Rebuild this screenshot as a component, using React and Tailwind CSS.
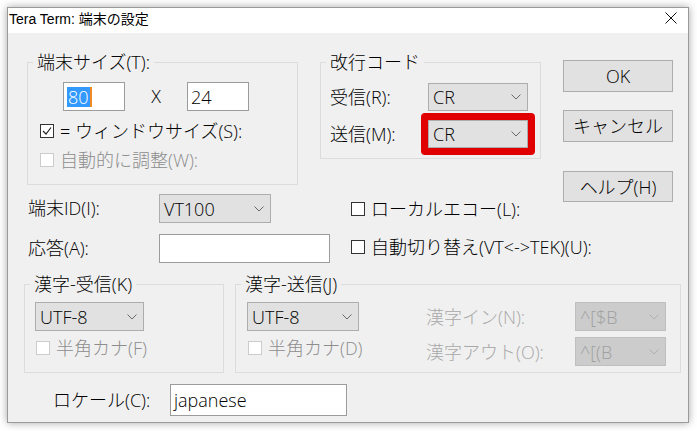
import React from "react";

function Chevron({ disabled }) {
  return (
    <svg width="10" height="6" viewBox="0 0 10 6" className="shrink-0">
      <path d="M0.5 0.5 L5 5 L9.5 0.5" fill="none" stroke={disabled ? "#b0b0b0" : "#6a6a6a"} strokeWidth="1" />
    </svg>
  );
}

function Select({ value, className = "", disabled }) {
  return (
    <div
      className={`shrink-0 flex items-center justify-between border pl-[4px] pr-[6px] leading-[22px] ${
        disabled ? "bg-[#cccccc] border-[#bfbfbf] text-[#a0a0a0]" : "bg-[#e1e1e1] border-[#adadad] text-black"
      } ${className}`}
    >
      <span>{value}</span>
      <Chevron disabled={disabled} />
    </div>
  );
}

function Input({ className = "", children }) {
  return (
    <div className={`shrink-0 flex items-center bg-white border border-[#9c9c9c] pl-[3px] leading-[22px] ${className}`}>
      {children}
    </div>
  );
}

function Check({ label, checked, disabled, className = "" }) {
  return (
    <div className={`flex items-center gap-[6px] leading-[22px] whitespace-nowrap ${className}`}>
      <span
        className={`shrink-0 w-[14px] h-[14px] border bg-white flex items-center justify-center ${
          disabled ? "border-[#cccccc]" : "border-[#333333]"
        }`}
      >
        {checked && (
          <svg width="10" height="10" viewBox="0 0 10 10">
            <path d="M1 5 L4 8 L9 1.5" fill="none" stroke="#222" strokeWidth="1.2" />
          </svg>
        )}
      </span>
      <span className={disabled ? "text-[#8d8d8d]" : "text-black"}>{label}</span>
    </div>
  );
}

function Button({ children, className = "" }) {
  return (
    <div className={`w-[110px] flex items-center justify-center bg-[#e1e1e1] border border-[#adadad] leading-[22px] ${className}`}>
      {children}
    </div>
  );
}

export default function App() {
  return (
    <div className="w-[697px] h-[431px] bg-white pt-[7px] pl-[7px] font-['Open_Sans','Noto_Sans_CJK_JP',sans-serif] font-light text-[18px] text-black">
      <div className="w-[682px] border border-[#9a9a9a] shadow-[0_0_8px_rgba(0,0,0,0.35)]">
        {/* title bar */}
        <div className="h-[25px] bg-white flex items-start justify-between pl-[1px] pr-[11px] font-normal">
          <span className="text-[14px] leading-[20px] mt-[1px] font-['Liberation_Sans','Noto_Sans_CJK_JP',sans-serif]">Tera Term: 端末の設定</span>
          <svg width="12" height="12" viewBox="0 0 12 12" className="mt-[4px]">
            <path d="M0.5 0.5 L11.5 11.5 M11.5 0.5 L0.5 11.5" stroke="#111" strokeWidth="1" />
          </svg>
        </div>

        {/* body */}
        <div className="bg-[#f0f0f0] pt-[18px] pb-[6px]">
          <div className="flex">
            <div className="w-[533px] shrink-0 flex flex-col">
              <div className="flex">
                <fieldset className="ml-[19px] w-[271px] h-[134px] border border-[#dcdcdc]">
                  <legend className="ml-[5px] px-[4px] leading-[22px]">端末サイズ(T):</legend>
                  <div className="flex items-center mt-[9px] pl-[35px]">
                    <Input className="w-[62px] h-[29px]">
                      <span className="bg-[#3399ff] text-white leading-[20px] px-[1px]">80</span>
                      <span className="w-[2px] h-[20px] bg-[#f08a24]"></span>
                    </Input>
                    <span className="w-[62px] text-center">X</span>
                    <Input className="w-[62px] h-[29px]">24</Input>
                  </div>
                  <Check className="mt-[9px] ml-[12px]" checked label="= ウィンドウサイズ(S):" />
                  <Check className="mt-[7px] ml-[12px]" disabled label="自動的に調整(W):" />
                </fieldset>

                <fieldset className="ml-[22px] w-[221px] h-[108px] border border-[#dcdcdc]">
                  <legend className="ml-[5px] px-[4px] leading-[22px]">改行コード</legend>
                  <div className="flex items-center mt-[10px] pl-[9px]">
                    <span className="w-[98px] shrink-0">受信(R):</span>
                    <Select value="CR" className="w-[100px] h-[28px]" />
                  </div>
                  <div className="flex items-center mt-[9px] pl-[9px]">
                    <span className="w-[98px] shrink-0">送信(M):</span>
                    <div className="-m-[7px] border-[7px] border-[#e00000] rounded-[4px]">
                      <Select value="CR" className="w-[100px] h-[28px]" />
                    </div>
                  </div>
                </fieldset>
              </div>

              <div className="flex items-center mt-[9px] pl-[20px] whitespace-nowrap">
                <span className="w-[131px] shrink-0">端末ID(I):</span>
                <Select value="VT100" className="w-[112px] h-[29px]" />
                <Check className="ml-[80px]" label="ローカルエコー(L):" />
              </div>

              <div className="flex items-center mt-[11px] pl-[20px] whitespace-nowrap">
                <span className="w-[131px] shrink-0">応答(A):</span>
                <Input className="w-[171px] h-[29px]" />
                <Check className="ml-[21px] -mt-[3px]" label="自動切り替え(VT<->TEK)(U):" />
              </div>
            </div>

            <div className="ml-[22px] pt-[9px] flex flex-col">
              <Button className="h-[32px]">OK</Button>
              <Button className="h-[32px] mt-[18px]">キャンセル</Button>
              <Button className="h-[31px] mt-[29px]">ヘルプ(H)</Button>
            </div>
          </div>

          <div className="flex mt-[10px]">
            <fieldset className="ml-[16px] w-[200px] h-[100px] border border-[#dcdcdc]">
              <legend className="ml-[5px] px-[4px] leading-[22px]">漢字-受信(K)</legend>
              <div className="pl-[10px] pt-[7px]">
                <Select value="UTF-8" className="w-[109px] h-[29px]" />
                <Check className="mt-[6px] ml-[1px]" disabled label="半角カナ(F)" />
              </div>
            </fieldset>

            <fieldset className="ml-[11px] w-[446px] h-[100px] border border-[#dcdcdc]">
              <legend className="ml-[5px] px-[4px] leading-[22px]">漢字-送信(J)</legend>
              <div className="flex pl-[11px] pt-[7px]">
                <div className="w-[112px] shrink-0">
                  <Select value="UTF-8" className="w-[112px] h-[29px]" />
                  <Check className="mt-[6px] ml-[1px]" disabled label="半角カナ(D)" />
                </div>
                <div className="ml-[67px] flex flex-col gap-[6px]">
                  <div className="flex items-center">
                    <span className="w-[149px] shrink-0 text-[#a8a8a8] leading-[22px]">漢字イン(N):</span>
                    <Select disabled value="^[$B" className="w-[91px] h-[29px]" />
                  </div>
                  <div className="flex items-center">
                    <span className="w-[149px] shrink-0 text-[#a8a8a8] leading-[22px]">漢字アウト(O):</span>
                    <Select disabled value="^[(B" className="w-[91px] h-[29px]" />
                  </div>
                </div>
              </div>
            </fieldset>
          </div>

          <div className="flex items-center mt-[11px] pl-[45px]">
            <span className="w-[117px] shrink-0 leading-[22px]">ロケール(C):</span>
            <Input className="w-[177px] h-[32px]">japanese</Input>
          </div>
        </div>
      </div>
    </div>
  );
}
